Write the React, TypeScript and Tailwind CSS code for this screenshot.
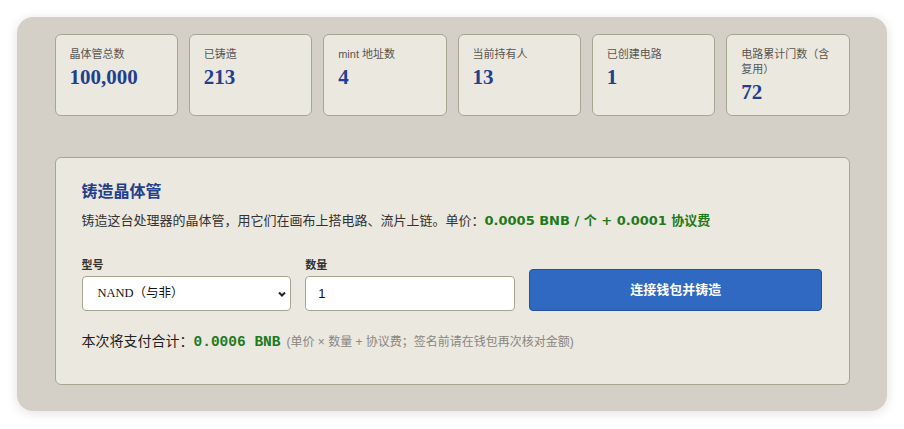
import React from "react";

const stats = [
  { label: "晶体管总数", value: "100,000" },
  { label: "已铸造", value: "213" },
  { label: "mint 地址数", value: "4" },
  { label: "当前持有人", value: "13" },
  { label: "已创建电路", value: "1" },
  { label: "电路累计门数（含复用）", value: "72" },
];

const sans = "font-['Liberation_Sans','Noto_Sans_CJK_SC',sans-serif]";

export default function App() {
  return (
    <div className={`min-h-[429px] bg-white p-[17px] ${sans}`}>
      <div className="rounded-[16px] bg-[#d4d0c8] pt-[17px] pb-[26px] shadow-[0_2px_12px_rgba(0,0,0,0.12)]">
        <div className="mx-auto w-[795px]">
          {/* stat cards */}
          <div className="grid grid-cols-6 gap-[11px]">
            {stats.map((s) => (
              <div
                key={s.label}
                className="h-[82px] rounded-[6px] border border-[#a9a593] bg-[#ebe8e0] px-[14px] pt-[12px]"
              >
                <div className="text-[11px] leading-[15px] text-[#5a5650]">{s.label}</div>
                <div className="mt-[3px] font-['Liberation_Serif','Noto_Sans_CJK_SC',serif] text-[21px] font-bold leading-[24px] text-[#1f3f8f]">
                  {s.value}
                </div>
              </div>
            ))}
          </div>

          {/* mint panel */}
          <div className="mt-[41px] h-[228px] rounded-[6px] border border-[#a9a593] bg-[#ebe8e0] px-[26px] pt-[22px]">
            <h2 className="text-[16px] font-bold leading-[24px] text-[#1f3f8f]">铸造晶体管</h2>
            <p className="mt-[8px] text-[13px] leading-[18px] text-[#333]">
              铸造这台处理器的晶体管，用它们在画布上搭电路、流片上链。单价：
              <b className="font-['DejaVu_Sans','Noto_Sans_CJK_SC',sans-serif] text-[13px] text-[#217a1a]">
                0.0005 BNB / 个 + 0.0001 协议费
              </b>
            </p>

            <div className="mt-[28px] grid grid-cols-[1fr_1fr_1.4fr] items-end gap-[14px]">
              <label className="flex flex-col">
                <span className="mb-[4px] text-[11px] font-bold leading-[14px] text-[#333]">型号</span>
                <div className="relative flex h-[35px] items-center rounded-[4px] border border-[#a9a593] bg-white pl-[15px]">
                  <span className="font-['Liberation_Serif','Noto_Sans_CJK_SC',serif] text-[12.5px] text-[#111]">
                    NAND（与非）
                  </span>
                  <svg
                    className="absolute right-[3px] top-1/2 -translate-y-1/2"
                    width="10"
                    height="10"
                    viewBox="0 0 10 10"
                  >
                    <path d="M2 3.5 L5 6.5 L8 3.5" fill="none" stroke="#222" strokeWidth="2" />
                  </svg>
                </div>
              </label>
              <label className="flex flex-col">
                <span className="mb-[4px] text-[11px] font-bold leading-[14px] text-[#333]">数量</span>
                <div className="flex h-[35px] items-center rounded-[4px] border border-[#a9a593] bg-white pl-[12px] text-[13px] text-[#111]">
                  1
                </div>
              </label>
              <button className="flex h-[42px] items-center justify-center rounded-[4px] border border-[#24509a] bg-[#3069c2] text-[13px] font-bold text-white">
                连接钱包并铸造
              </button>
            </div>

            <div className="mt-[20px] flex items-baseline text-[14px] leading-[20px] text-[#222]">
              <span>本次将支付合计：</span>
              <b className="font-['Liberation_Mono',monospace] text-[14.5px] text-[#217a1a]">0.0006 BNB</b>
              <span className="ml-[6px] text-[12px] text-[#8a8680]">
                (单价 × 数量 + 协议费；签名前请在钱包再次核对金额)
              </span>
            </div>
          </div>
        </div>
      </div>
    </div>
  );
}
